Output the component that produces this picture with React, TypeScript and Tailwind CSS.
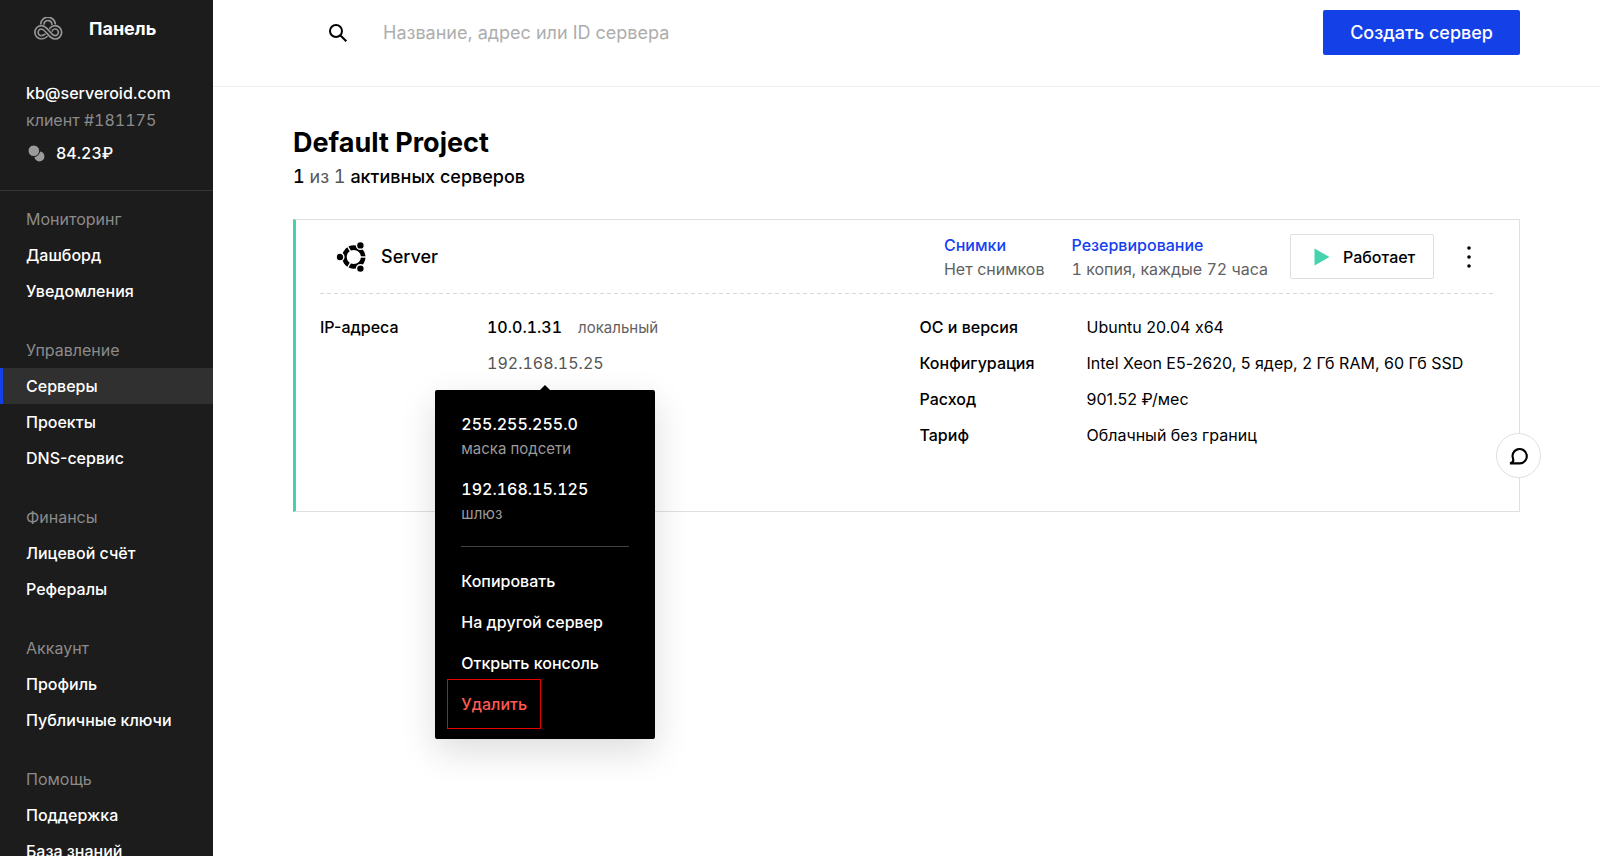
import type { ReactNode } from 'react';

const NAV = [
  { title: 'Мониторинг', items: ['Дашборд', 'Уведомления'] },
  { title: 'Управление', items: ['Серверы', 'Проекты', 'DNS-сервис'] },
  { title: 'Финансы', items: ['Лицевой счёт', 'Рефералы'] },
  { title: 'Аккаунт', items: ['Профиль', 'Публичные ключи'] },
  { title: 'Помощь', items: ['Поддержка', 'База знаний'] },
];

const SPECS = [
  ['ОС и версия', 'Ubuntu 20.04 x64'],
  ['Конфигурация', 'Intel Xeon E5-2620, 5 ядер, 2 Гб RAM, 60 Гб SSD'],
  ['Расход', '901.52 ₽/мес'],
  ['Тариф', 'Облачный без границ'],
];

function KnotLogo() {
  const top = 'M28 24A17 17 0 1 1 59 32C51 44 39 61 25 61';
  const base = 'M26 61A15 15 0 1 1 25 31C41 31 50 61 66 61A15 15 0 1 0 66 31C61 31 58 33 54 37';
  return (
    <svg width="30" height="24" viewBox="0 0 90 72" fill="none">
      {[top, base].map((d) => (
        <g key={d}>
          <path d={d} stroke="#1c1c1c" strokeWidth="19" />
          <path d={d} stroke="#979797" strokeWidth="15" />
          <path d={d} stroke="#1c1c1c" strokeWidth="5" />
        </g>
      ))}
    </svg>
  );
}

function CoinsIcon() {
  return (
    <svg width="17" height="17" viewBox="0 0 17 17">
      <circle cx="11.4" cy="11.4" r="5" fill="#9b9b9b" />
      <circle cx="5.8" cy="5.8" r="5.8" fill="#9b9b9b" stroke="#1c1c1c" strokeWidth="1" />
    </svg>
  );
}

function UbuntuIcon() {
  return (
    <svg width="30" height="32" viewBox="0 0 30 32">
      <circle cx="17.8" cy="16" r="9.4" fill="none" stroke="#000" strokeWidth="4.6" />
      <g stroke="#fff" strokeWidth="1.4">
        <path d="M17.8 16H30" />
        <path d="M17.8 16L11.5 5.1" />
        <path d="M17.8 16L11.5 26.9" />
        <circle cx="4" cy="16" r="3.9" />
        <circle cx="24.4" cy="4.4" r="3.9" />
        <circle cx="24.4" cy="27.6" r="3.9" />
      </g>
    </svg>
  );
}

function Spec({ label, children }: { label: string; children: ReactNode }) {
  return (
    <div className="flex min-h-9 items-center">
      <dt className="w-[167px] shrink-0 font-medium">{label}</dt>
      <dd>{children}</dd>
    </div>
  );
}

function Sidebar() {
  return (
    <aside className="sticky top-0 h-screen w-[213px] shrink-0 overflow-hidden bg-[#1c1c1c] text-white">
      <div className="flex h-[58px] items-center gap-[26px] pl-[33px]">
        <KnotLogo />
        <span className="text-lg font-bold">Панель</span>
      </div>
      <div className="flex flex-col border-b border-[#333] px-[26px] pt-[22px] pb-[25px]">
        <span className="leading-[26px] font-medium">kb@serveroid.com</span>
        <span className="leading-[28px] text-[#8b8b8b] tabular-nums">клиент #181175</span>
        <span className="flex items-center gap-[11px] pt-[7px] pl-[2px] font-medium tabular-nums">
          <CoinsIcon />
          84.23₽
        </span>
      </div>
      <nav className="flex flex-col gap-[29px] pt-4">
        {NAV.map((group) => (
          <section key={group.title}>
            <h2 className="mb-[6px] pl-[26px] text-base text-[#8b8b8b]">{group.title}</h2>
            {group.items.map((item) => (
              <a
                key={item}
                href="#"
                className={
                  item === 'Серверы'
                    ? 'flex h-9 items-center border-l-[3px] border-[#1440e8] bg-[#303030] pl-[23px] font-medium'
                    : 'flex h-9 items-center pl-[26px] font-medium'
                }
              >
                {item}
              </a>
            ))}
          </section>
        ))}
      </nav>
    </aside>
  );
}

function AddressMenu() {
  return (
    <div className="absolute top-full left-1/2 z-10 mt-[15px] w-[220px] -translate-x-1/2 rounded-[2px] bg-black px-[26px] pt-[22px] pb-[10px] text-white shadow-[0_12px_36px_rgba(0,0,0,0.14)]">
      <svg className="absolute -top-[5px] left-1/2 -translate-x-1/2" width="12" height="6" viewBox="0 0 12 6">
        <path d="M0 6L6 0L12 6Z" />
      </svg>
      <dl className="flex flex-col gap-4 border-b border-[#444] pb-5 tabular-nums">
        <div className="flex flex-col-reverse">
          <dt className="text-[15px] leading-[25px] text-[#9b9b9b]">маска подсети</dt>
          <dd className="leading-6 font-medium">255.255.255.0</dd>
        </div>
        <div className="flex flex-col-reverse">
          <dt className="text-[15px] leading-[25px] text-[#9b9b9b]">шлюз</dt>
          <dd className="leading-6 font-medium">192.168.15.125</dd>
        </div>
      </dl>
      <div className="flex flex-col items-start pt-[13px]">
        <button className="h-[41px] font-medium">Копировать</button>
        <button className="h-[41px] font-medium">На другой сервер</button>
        <button className="h-[41px] font-medium">Открыть консоль</button>
        <button className="-mx-[14px] -mt-1 h-[50px] border border-[#e60000] px-[13px] font-medium text-[#ff5a4f]">
          Удалить
        </button>
      </div>
    </div>
  );
}

function ServerCard() {
  return (
    <article className="h-[293px] border border-l-[3px] border-[#dfdfdf] border-l-[#45d3ae] pr-[26px] pl-6">
      <div className="flex h-[73px] items-center">
        <div className="flex flex-1 items-center gap-[15px] pl-4">
          <UbuntuIcon />
          <h2 className="text-lg font-medium">Server</h2>
        </div>
        <div className="mr-[27px] leading-6">
          <a href="#" className="font-medium text-[#1440f0]">Снимки</a>
          <p className="text-[#616161]">Нет снимков</p>
        </div>
        <div className="mr-[22px] leading-6">
          <a href="#" className="font-medium text-[#1440f0]">Резервирование</a>
          <p className="text-[#616161] tabular-nums">1 копия, каждые 72 часа</p>
        </div>
        <button className="flex h-[45px] w-[144px] items-center gap-[13px] rounded-[2px] border border-[#dfdfdf] pl-[23px] font-medium">
          <svg width="16" height="18" viewBox="0 0 16 18">
            <path d="M0.5 0.5L15.5 9L0.5 17.5Z" fill="#45d3ae" />
          </svg>
          Работает
        </button>
        <button aria-label="Действия" className="mr-3 ml-[23px] flex h-[45px] w-6 items-center justify-center">
          <svg width="4" height="22" viewBox="0 0 4 22">
            <circle cx="2" cy="2" r="1.8" />
            <circle cx="2" cy="11" r="1.8" />
            <circle cx="2" cy="20" r="1.8" />
          </svg>
        </button>
      </div>
      <div className="h-px bg-[repeating-linear-gradient(90deg,#d8d8d8_0_4px,transparent_4px_7px)]" />
      <div className="grid grid-cols-2 gap-[26px] pt-[15px]">
        <dl>
          <Spec label="IP-адреса">
            <span className="font-medium tabular-nums">10.0.1.31</span>
            <span className="ml-4 text-[15px] text-[#616161]">локальный</span>
          </Spec>
          <Spec label="">
            <span className="relative inline-block text-[#555] tabular-nums">
              192.168.15.25
              <AddressMenu />
            </span>
          </Spec>
        </dl>
        {/* calt off: otherwise Inter turns the x of "x64" into a multiplication sign */}
        <dl className="[font-feature-settings:'calt'_0]">
          {SPECS.map(([label, value]) => (
            <Spec key={label} label={label}>{value}</Spec>
          ))}
        </dl>
      </div>
    </article>
  );
}

export default function App() {
  return (
    <div className="flex min-h-screen bg-white font-['Inter',sans-serif] text-base text-black">
      <Sidebar />
      <div className="min-w-0 flex-1">
        <header className="flex h-[87px] items-start border-b border-[#efefef] px-20 pt-[10px]">
          <label className="flex h-[45px] flex-1 items-center gap-9 pl-9">
            <svg width="18" height="18" viewBox="0 0 18 18" fill="none" stroke="#000" strokeWidth="2">
              <circle cx="7" cy="7" r="6" />
              <path d="M11.3 11.3L17.3 17.3" />
            </svg>
            <input
              type="search"
              aria-label="Поиск"
              placeholder="Название, адрес или ID сервера"
              className="flex-1 text-lg outline-none placeholder:text-[#adadad]"
            />
          </label>
          <button className="h-[45px] rounded-[2px] bg-[#1440e8] px-[27px] text-lg font-medium text-white">
            Создать сервер
          </button>
        </header>
        <main className="px-20 pt-10">
          <h1 className="text-[27px] leading-8 font-bold">Default Project</h1>
          <p className="mt-1 mb-[28px] text-lg font-medium tabular-nums">
            1 <span className="font-normal text-[#555]">из 1</span> активных серверов
          </p>
          <ServerCard />
        </main>
      </div>
      <button
        aria-label="Чат"
        className="fixed right-[59px] bottom-[378px] flex size-[45px] items-center justify-center rounded-full border border-[#dfdfdf] bg-white"
      >
        <svg width="20" height="18" viewBox="0 0 20 18" fill="none" stroke="#000" strokeWidth="2.2">
          <path d="M1 16.4C3.2 16 4.6 14.6 4.2 12.4A7.2 7.2 0 1 1 11 16.4Z" />
        </svg>
      </button>
    </div>
  );
}
